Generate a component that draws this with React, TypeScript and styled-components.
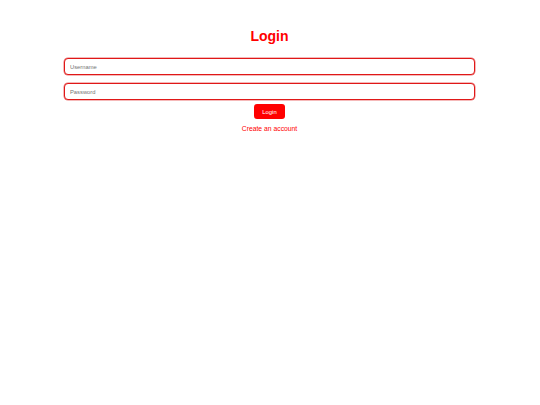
import React, { FC } from "react";
import styled, { createGlobalStyle } from "styled-components";

const GlobalStyle = createGlobalStyle`
    body {
        margin: 0;
        background: #fff;
        font-family: "Liberation Sans", Arial, sans-serif;
    }
`;

const Page = styled.div`
    display: flex;
    flex-direction: column;
    align-items: center;
    padding: 28px 65px 0 64px;
`;

const Title = styled.h1`
    margin: 0 0 14px 0;
    font-size: 14px;
    line-height: 16px;
    font-weight: bold;
    color: #f00;
`;

const Form = styled.form`
    width: 100%;
    display: flex;
    flex-direction: column;
    align-items: center;
`;

const Field = styled.input`
    width: 100%;
    height: 17px;
    box-sizing: border-box;
    margin: 0 0 8px 0;
    padding: 0 5px;
    border: 1px solid #e01818;
    border-radius: 4px;
    outline: none;
    font-family: inherit;
    font-size: 5.8px;
    color: #333;
    box-shadow: 0 0 0 0.5px rgba(224, 24, 24, 0.6);

    &:last-of-type {
        margin-bottom: 4px;
    }

    ::placeholder {
        color: #777;
    }
`;

const SubmitBtn = styled.button`
    height: 15px;
    padding: 0 8px;
    border: none;
    border-radius: 3px;
    background: #f00;
    color: #fff;
    font-family: inherit;
    font-size: 5.9px;

    :hover {
        cursor: pointer;
    }
`;

const SignupLink = styled.a`
    margin-top: 6px;
    font-size: 6.8px;
    line-height: 8px;
    color: #f00;
    text-decoration: none;
`;

const App: FC = () => (
    <>
        <GlobalStyle />
        <Page>
            <Title>Login</Title>
            <Form onSubmit={e => e.preventDefault()}>
                <Field type="text" placeholder="Username" />
                <Field type="password" placeholder="Password" />
                <SubmitBtn type="submit">Login</SubmitBtn>
                <SignupLink href="#">Create an account</SignupLink>
            </Form>
        </Page>
    </>
);

export default App;
